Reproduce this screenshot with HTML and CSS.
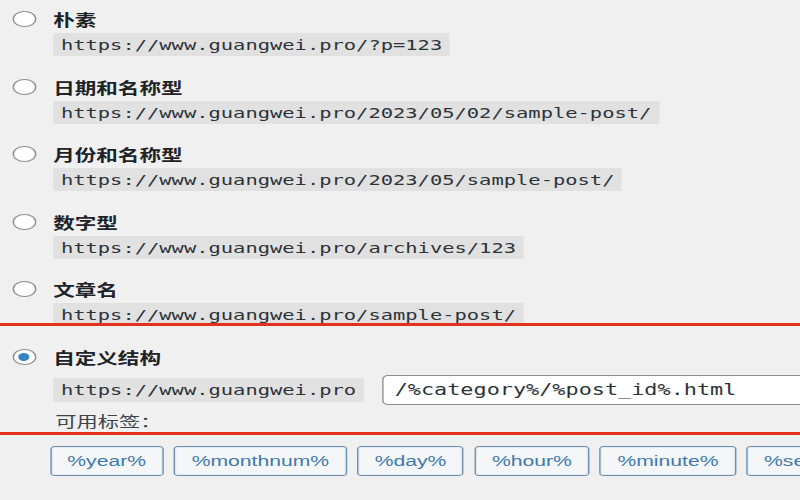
FILE: index.html
```html
<!DOCTYPE html>
<html lang="zh-CN">
<head>
<meta charset="utf-8">
<title>固定链接设置</title>
<link rel="stylesheet" href="styles.css">
</head>
<body>
<div class="page">
  <div class="option">
    <input class="radio" type="radio" name="permalink">
    <span class="choice">朴素</span>
    <code class="sample">https://www.guangwei.pro/?p=123</code>
  </div>
  <div class="option">
    <input class="radio" type="radio" name="permalink">
    <span class="choice">日期和名称型</span>
    <code class="sample">https://www.guangwei.pro/2023/05/02/sample-post/</code>
  </div>
  <div class="option">
    <input class="radio" type="radio" name="permalink">
    <span class="choice">月份和名称型</span>
    <code class="sample">https://www.guangwei.pro/2023/05/sample-post/</code>
  </div>
  <div class="option">
    <input class="radio" type="radio" name="permalink">
    <span class="choice">数字型</span>
    <code class="sample">https://www.guangwei.pro/archives/123</code>
  </div>
  <div class="option">
    <input class="radio" type="radio" name="permalink">
    <span class="choice">文章名</span>
    <code class="sample">https://www.guangwei.pro/sample-post/</code>
  </div>
  <div class="option custom">
    <input class="radio" type="radio" name="permalink" checked>
    <span class="choice">自定义结构</span>
    <div class="custom-row">
      <code class="sample">https://www.guangwei.pro</code>
      <input class="structure" type="text" value="/%category%/%post_id%.html">
    </div>
    <div class="tags-title">可用标签：</div>
    <div class="tags">
      <button class="tag" type="button">%year%</button>
      <button class="tag" type="button">%monthnum%</button>
      <button class="tag" type="button">%day%</button>
      <button class="tag" type="button">%hour%</button>
      <button class="tag" type="button">%minute%</button>
      <button class="tag" type="button">%second%</button>
    </div>
  </div>
</div>
<div class="annotation"></div>
</body>
</html>
```

FILE: styles.css
```css
html, body {
  margin: 0;
  padding: 0;
}

body {
  background: #f0f0f1;
  width: 800px;
  height: 500px;
  overflow: hidden;
  position: relative;
  font-family: "Noto Sans CJK SC", "Noto Sans", sans-serif;
  color: #1d2327;
}

.page {
  width: 572px;
  padding-top: 7px;
  transform: scaleX(1.4);
  transform-origin: 0 0;
}

.option {
  display: grid;
  grid-template-columns: 38px auto;
  grid-auto-rows: auto;
  align-items: center;
  justify-items: start;
  margin-bottom: 18.5px;
}

.radio {
  appearance: none;
  -webkit-appearance: none;
  box-sizing: border-box;
  width: 17px;
  height: 16px;
  margin: 0 0 0 8.5px;
  border: 1px solid #8c8f94;
  border-radius: 50%;
  background: #fff;
  display: flex;
  align-items: center;
  justify-content: center;
}

.radio:checked::before {
  content: "";
  width: 8px;
  height: 8px;
  border-radius: 50%;
  background: #3582c4;
}

.choice {
  font-size: 15.4px;
  font-weight: 600;
  line-height: 24px;
  height: 24px;
  color: #1d2327;
}

.sample {
  grid-column: 2;
  display: inline-block;
  margin-top: 2px;
  padding: 3px 5.5px;
  font-family: "DejaVu Sans Mono", "Liberation Mono", monospace;
  font-size: 14.6px;
  line-height: 17px;
  color: #2c3338;
  background: rgba(0, 0, 0, 0.06);
  white-space: nowrap;
}

.custom {
  margin-bottom: 0;
}

.custom-row {
  grid-column: 2;
  display: flex;
  align-items: center;
  gap: 13px;
  margin-top: 6px;
  height: 30px;
}

.custom-row .sample {
  margin-top: 0;
  padding: 3.5px 5.5px;
}

.structure {
  box-sizing: border-box;
  width: 420px;
  height: 30px;
  margin: 0;
  padding: 0 8px;
  border: 1px solid #8c8f94;
  border-radius: 4px;
  background: #fff;
  font-family: "DejaVu Sans Mono", "Liberation Mono", monospace;
  font-size: 15.6px;
  color: #2c3338;
  flex-shrink: 0;
}

.tags-title {
  grid-column: 2;
  margin-top: 5px;
  margin-left: 1.5px;
  font-size: 15.2px;
  line-height: 20px;
  color: #3c434a;
}

.tags {
  grid-column: 2;
  display: flex;
  gap: 7.4px;
  margin-top: 16px;
  margin-left: -2.5px;
  white-space: nowrap;
}

.tag {
  box-sizing: border-box;
  height: 30px;
  margin: 0;
  padding: 0 11.6px;
  border: 1px solid #6f8fac;
  border-radius: 3px;
  background: #f4f6f8;
  box-shadow: inset 0 0 0 1px #e3ecf4;
  font-family: "Liberation Sans", Arial, sans-serif;
  font-size: 15.1px;
  color: #4079ad;
  flex-shrink: 0;
}

.annotation {
  position: absolute;
  left: -10px;
  right: -10px;
  top: 323px;
  height: 106px;
  border: 3px solid #e3301f;
  pointer-events: none;
}
```
